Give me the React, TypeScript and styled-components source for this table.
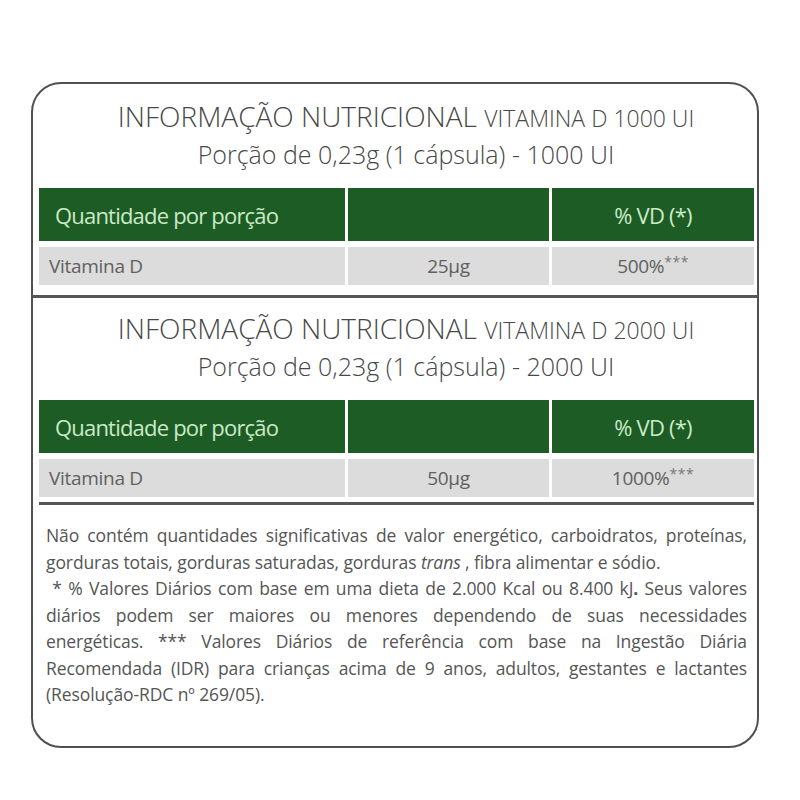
import styled, { createGlobalStyle } from "styled-components";

const Global = createGlobalStyle`
  body {
    margin: 0;
    background: #fff;
    font-family: "Open Sans", "Noto Sans", sans-serif;
  }
`;

const Page = styled.div`
  padding: 82px 0 0 31px;
`;

const Card = styled.div`
  width: 728px;
  height: 666px;
  box-sizing: border-box;
  border: 2px solid #505050;
  border-radius: 30px;
  overflow: hidden;
  display: flex;
  flex-direction: column;
`;

const Section = styled.section<{ $top: number }>`
  padding-top: ${(p) => p.$top}px;
`;

const Heading = styled.div`
  padding-left: 22px;
  text-align: center;
  color: #474747;
  font-weight: 300;
`;

const HeadingMain = styled.div`
  font-size: 28px;
  line-height: 36px;
  white-space: nowrap;
`;

const HeadingSub = styled.span`
  font-size: 23px;
`;

const Portion = styled.div`
  font-size: 25px;
  line-height: 32px;
  margin-top: 2px;
  white-space: nowrap;
`;

const Table = styled.div`
  margin: 18px 3px 0 6px;
  display: grid;
  grid-template-columns: 306px 201px 1fr;
  column-gap: 3px;
  row-gap: 6px;
`;

const HeadCell = styled.div<{ $align?: string }>`
  background: #1d5c24;
  height: 53px;
  display: flex;
  align-items: center;
  justify-content: ${(p) => p.$align ?? "center"};
  padding: 0 16px;
  color: #cbeac8;
  font-size: 22px;
  letter-spacing: -0.8px;
`;

const BodyCell = styled.div<{ $align?: string }>`
  background: #dcdcdc;
  height: 38px;
  display: flex;
  align-items: center;
  justify-content: ${(p) => p.$align ?? "center"};
  padding: 0 10px;
  color: #606060;
  font-size: 19px;
  letter-spacing: -0.3px;
`;

const Stars = styled.span`
  font-size: 14px;
  position: relative;
  top: -5px;
  letter-spacing: 0.5px;
  color: #777;
`;

const Rule = styled.hr<{ $inset?: boolean }>`
  margin: ${(p) => (p.$inset ? "5px 3px 0 6px" : "10px 0 0")};
  border: none;
  height: 3px;
  background: #555;
`;

const Notes = styled.div`
  padding: 17px 10px 0 13px;
  color: #555;
  font-size: 17.5px;
  letter-spacing: -0.1px;
  line-height: 26.5px;
`;

const NoteLine = styled.div<{ $justify?: boolean }>`
  white-space: ${(p) => (p.$justify ? "normal" : "nowrap")};
  text-align: ${(p) => (p.$justify ? "justify" : "left")};
  text-align-last: ${(p) => (p.$justify ? "justify" : "left")};
`;

interface PanelProps {
  dose: string;
  amount: string;
  vd: string;
  top: number;
  inset?: boolean;
}

function Panel({ dose, amount, vd, top, inset }: PanelProps) {
  return (
    <Section $top={top}>
      <Heading>
        <HeadingMain>
          INFORMAÇÃO NUTRICIONAL <HeadingSub>VITAMINA D {dose} UI</HeadingSub>
        </HeadingMain>
        <Portion>Porção de 0,23g (1 cápsula) - {dose} UI</Portion>
      </Heading>
      <Table>
        <HeadCell $align="flex-start">Quantidade por porção</HeadCell>
        <HeadCell />
        <HeadCell>% VD (*)</HeadCell>
        <BodyCell $align="flex-start">Vitamina D</BodyCell>
        <BodyCell>{amount}</BodyCell>
        <BodyCell>
          {vd}
          <Stars>***</Stars>
        </BodyCell>
      </Table>
      <Rule $inset={inset} />
    </Section>
  );
}

export default function App() {
  return (
    <>
      <Global />
      <Page>
        <Card>
          <Panel top={14} dose="1000" amount="25µg" vd="500%" />
          <Panel top={12} dose="2000" amount="50µg" vd="1000%" inset />
          <Notes>
            <NoteLine $justify>
              Não contém quantidades significativas de valor energético, carboidratos, proteínas,
            </NoteLine>
            <NoteLine>
              gorduras totais, gorduras saturadas, gorduras <i>trans</i> , fibra alimentar e sódio.
            </NoteLine>
            <NoteLine $justify>
              &nbsp;* % Valores Diários com base em uma dieta de 2.000 Kcal ou 8.400 kJ<b>.</b> Seus valores
            </NoteLine>
            <NoteLine $justify>
              diários podem ser maiores ou menores dependendo de suas necessidades
            </NoteLine>
            <NoteLine $justify>
              energéticas. *** Valores Diários de referência com base na Ingestão Diária
            </NoteLine>
            <NoteLine $justify>
              Recomendada (IDR) para crianças acima de 9 anos, adultos, gestantes e lactantes
            </NoteLine>
            <NoteLine>(Resolução-RDC nº 269/05).</NoteLine>
          </Notes>
        </Card>
      </Page>
    </>
  );
}
